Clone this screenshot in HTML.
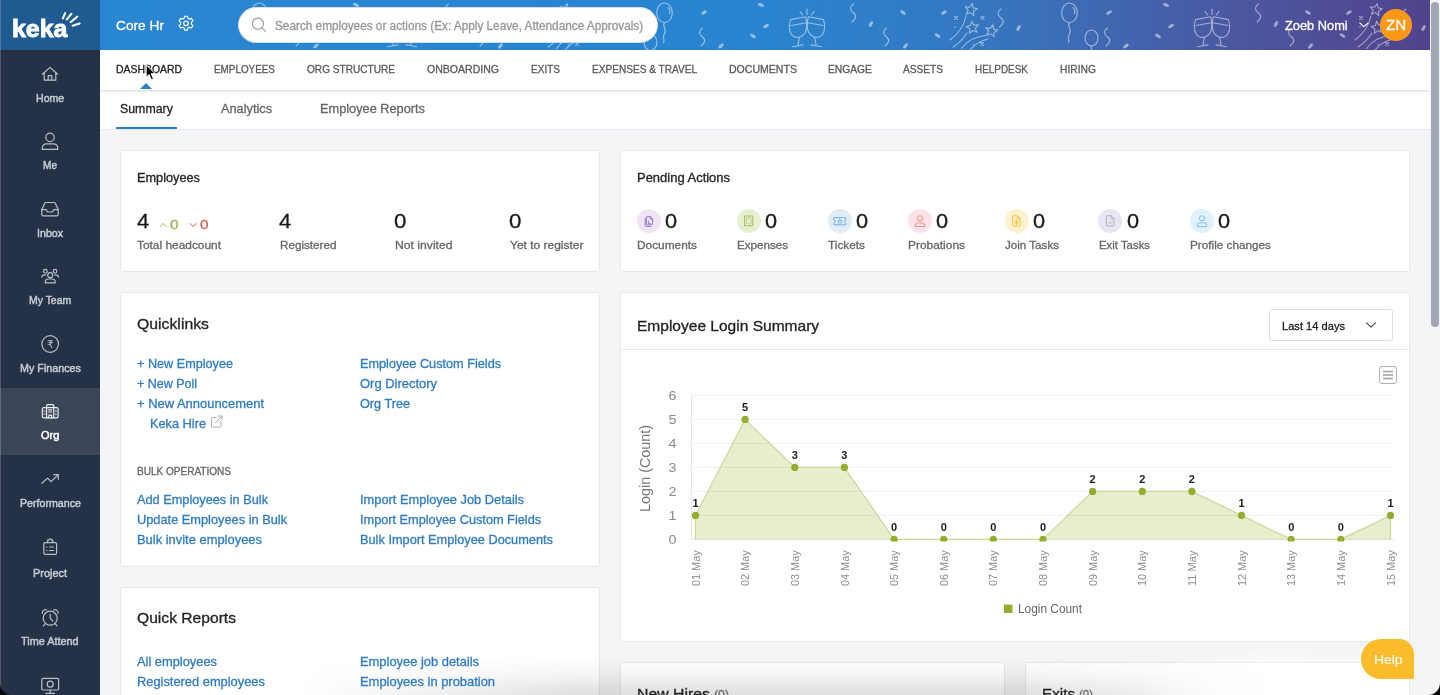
<!DOCTYPE html>
<html lang="en">
<head>
<meta charset="utf-8">
<title>Keka - Core HR Dashboard</title>
<style>
*{box-sizing:border-box;margin:0;padding:0}
html,body{width:1440px;height:695px;overflow:hidden;background:#f4f5f7;font-family:"Liberation Sans",sans-serif}
.abs{position:absolute}
.t{position:absolute;white-space:nowrap;-webkit-text-stroke:0.3px currentColor;transform-origin:0 50%;font-family:"Liberation Sans",sans-serif}
#side{left:0;top:0;width:100px;height:695px;background:#253146}
#logo{left:0;top:0;width:100px;height:50px;background:#1f5b90}
#orgact{left:0;top:388px;width:100px;height:67px;background:#3a4557}
#hdr{left:100px;top:0;width:1330px;height:50px;background:linear-gradient(90deg,#2986d1 0%,#2a84cf 50%,#3478c2 65%,#3f69b2 75%,#4a58a1 85%,#4f4c95 93%,#50448c 100%)}
#search{left:238px;top:7px;width:420px;height:36px;border-radius:18px;background:#fff;border:1px solid #d8dde3}
#nav{left:100px;top:50px;width:1330px;height:39.500px;background:#fff;box-shadow:0 1px 2.500px rgba(40,50,70,.22)}
#sub{left:100px;top:89.500px;width:1330px;height:40px;background:#fff;border-bottom:1px solid #e6e9ed}
#subact{left:116px;top:126.8px;width:61px;height:2.4px;background:#2a80cd}
#tri{left:139.7px;top:83.200px;width:0;height:0;border-left:6.500px solid transparent;border-right:6.500px solid transparent;border-bottom:6.400px solid #2a80cd}
.card{position:absolute;background:#fff;border:1px solid #e6e8eb;border-radius:3px}
#sbtrack{left:1430px;top:0;width:10px;height:695px;background:#f5f5f7}
#sbthumb{left:1431px;top:2px;width:8px;height:325px;border-radius:4px;background:#a0a6b3}
#avatar{left:1380px;top:9px;width:32px;height:32px;border-radius:16px;background:#fb9917}
#dd{left:1269px;top:309px;width:124px;height:32px;border:1px solid #dcdfe3;border-radius:3px;background:#fff}
#help{left:1361px;top:639px;width:53px;height:40px;background:#fbbc2c;border-radius:20px 15px 0 20px}
.pc{position:absolute;width:24px;height:24px;border-radius:12px;top:208.8px}
</style>
</head>
<body>
<div id="side" class="abs"></div>
<div id="orgact" class="abs"></div>
<div id="logo" class="abs"></div>
<div id="hdr" class="abs"></div>
<div id="sub" class="abs"></div>
<div id="nav" class="abs"></div>
<div id="subact" class="abs"></div>
<div id="tri" class="abs"></div>
<svg class="abs" style="left:100px;top:0" width="1330" height="50" viewBox="100 0 1330 50" fill="none" stroke="#fff" stroke-width="1.1" stroke-linecap="round" stroke-linejoin="round" opacity="0.5">
<g id="festtile"><ellipse cx="664.500" cy="12.800" rx="7.800" ry="9.800"/><path d="M664.500 22.600c-3 4 3 7 0 11s1 6-1 9"/><path d="M668 7.500a4 5 0 0 1 1.500 6"/>
<ellipse cx="704" cy="12.5" rx="3.200" ry="1.500" transform="rotate(-30 704 12.5)" fill="#fff" stroke="none"/>
<ellipse cx="766" cy="26" rx="3.200" ry="1.500" transform="rotate(-35 766 26)" fill="#fff" stroke="none"/>
<ellipse cx="753" cy="36" rx="3.200" ry="1.500" transform="rotate(30 753 36)" fill="#fff" stroke="none"/>
<ellipse cx="721" cy="46" rx="3.200" ry="1.500" transform="rotate(-40 721 46)" fill="#fff" stroke="none"/>
<ellipse cx="871" cy="24" rx="3.200" ry="1.500" transform="rotate(-60 871 24)" fill="#fff" stroke="none"/>
<ellipse cx="903" cy="12.5" rx="3.200" ry="1.500" transform="rotate(30 903 12.5)" fill="#fff" stroke="none"/>
<ellipse cx="944" cy="12.5" rx="3.200" ry="1.500" transform="rotate(-30 944 12.5)" fill="#fff" stroke="none"/>
<ellipse cx="937.5" cy="35.5" rx="3.200" ry="1.500" transform="rotate(30 937.5 35.5)" fill="#fff" stroke="none"/>
<ellipse cx="905.5" cy="46" rx="3.200" ry="1.500" transform="rotate(-50 905.5 46)" fill="#fff" stroke="none"/>
<ellipse cx="1018.6" cy="28" rx="3.200" ry="1.500" transform="rotate(-60 1018.6 28)" fill="#fff" stroke="none"/>
<ellipse cx="761" cy="5" rx="3.200" ry="1.500" transform="rotate(20 761 5)" fill="#fff" stroke="none"/>
<path d="M702.5 28c-4 3-4 6 0 9s2 6-1.500 9"/>
<path d="M853.5 4c-4 3-4 6 0 9s2 6-1.500 9"/>
<path d="M886.5 28c-4 3-4 6 0 9s2 6-1.500 9"/>
<path d="M1001.0 9c-4 3-4 6 0 9s2 6-1.500 9"/>
<path d="M790.500 19.600l15.200-2.800c2.200 9.500 1 18-6.500 20.500c-7.500 1-12-6-8.700-17.700z"/><path d="M791 25.500l15.500-2.800"/><path d="M799.500 37.300l-1.800 8.500 M792.500 46.800l10.500-1.900"/>
<path d="M823.500 19.600l-15.200-2.800c-2.200 9.500-1 18 6.500 20.500c7.500 1 12-6 8.700-17.700z"/><path d="M823 25.500l-15.500-2.800"/><path d="M814.500 37.300l1.800 8.500 M821.500 46.800l-10.500-1.900"/>
<path d="M807 9v5.500 M800 11.500l2.600 3.400 M814 11.500l-2.600 3.400"/>
<polygon points="972.1,3.5 973.1,7.8 977.3,8.9 973.5,11.2 973.8,15.6 970.5,12.6 966.4,14.2 968.1,10.2 965.3,6.8 969.7,7.2"/>
<polygon points="971.6,21.3 973.9,25.1 978.3,24.8 975.3,28.1 976.9,32.2 972.9,30.5 969.5,33.3 969.9,28.9 966.2,26.5 970.5,25.5"/>
<polygon points="992.8,24.7 993.6,29.1 997.9,30.3 994.0,32.4 994.1,36.8 990.9,33.8 986.7,35.3 988.6,31.3 986.0,27.8 990.3,28.4"/>
<path d="M966 16c-2 10-8 18-16 24"/><path d="M967 33c-4 6-9 11-14 14"/><path d="M985.500 35.500c-10 1-19 6-24 13"/><path d="M988 39c-8 2-14 6-18 11"/>
<path d="M954.5 16.5l3 3m0-3l-3 3"/>
<path d="M981.0 16.5l3 3m0-3l-3 3"/>
<path d="M980.5 42.5l3 3m0-3l-3 3"/>
<circle cx="955" cy="27" r=".8" fill="#fff" stroke="none"/><circle cx="973.500" cy="44.500" r=".8" fill="#fff" stroke="none"/></g>
<use href="#festtile" x="405"/><use href="#festtile" x="-405"/><use href="#festtile" x="810"/>
<ellipse cx="650.500" cy="42.500" rx="6.500" ry="8"/><ellipse cx="1091.500" cy="38" rx="6.500" ry="8"/><path d="M1091.500 46c-1 2 1 3 0 5"/>
</svg>
<div id="search" class="abs"></div>
<div id="avatar" class="abs"></div>

<div class="card" style="left:120px;top:150px;width:480px;height:122px"></div>
<div class="card" style="left:620px;top:150px;width:790px;height:122px"></div>
<div class="card" style="left:120px;top:292px;width:480px;height:275px"></div>
<div class="card" style="left:620px;top:292px;width:790px;height:350px"></div>
<div class="abs" style="left:621px;top:349px;width:788px;height:1px;background:#e4e7eb"></div>
<div class="card" style="left:120px;top:587px;width:480px;height:140px"></div>
<div class="card" style="left:620px;top:662px;width:385px;height:80px"></div>
<div class="card" style="left:1025px;top:662px;width:385px;height:80px"></div>
<div id="dd" class="abs"></div>

<div class="pc" style="left:636.9px;background:#f0e3f3"></div>
<div class="pc" style="left:737px;background:#e6efd0"></div>
<div class="pc" style="left:828px;background:#e2ecf7"></div>
<div class="pc" style="left:908px;background:#fbe4e7"></div>
<div class="pc" style="left:1004.7px;background:#fdf1d0"></div>
<div class="pc" style="left:1098.4px;background:#e9e6f3"></div>
<div class="pc" style="left:1190px;background:#dff1fa"></div>

<div class="abs" style="left:0;top:0;width:1440px;height:695px;will-change:transform"><svg class="abs" style="left:0;top:0" width="1440" height="695" viewBox="0 0 1440 695">
<rect x="691" y="538.9" width="703" height="1" fill="#e2e4e7"/>
<rect x="691" y="514.9" width="703" height="1" fill="#eeeff1"/>
<rect x="691" y="490.9" width="703" height="1" fill="#eeeff1"/>
<rect x="691" y="466.9" width="703" height="1" fill="#eeeff1"/>
<rect x="691" y="442.9" width="703" height="1" fill="#eeeff1"/>
<rect x="691" y="418.9" width="703" height="1" fill="#eeeff1"/>
<rect x="691" y="394.9" width="703" height="1" fill="#eeeff1"/>
<rect x="691" y="395.400" width="1" height="144" fill="#e6e8eb"/>
<clipPath id="plotclip"><rect x="685" y="380" width="715" height="161.600"/></clipPath><g clip-path="url(#plotclip)">
<polygon points="695.5,539.4 695.5,515.4 745.1,419.4 794.8,467.4 844.4,467.4 894.1,539.4 943.7,539.4 993.3,539.4 1043.0,539.4 1092.6,491.4 1142.3,491.4 1191.9,491.4 1241.5,515.4 1291.2,539.4 1340.8,539.4 1390.5,515.4 1390.5,539.4" fill="#a2b93c" fill-opacity="0.26"/>
<polyline points="695.5,539.4 695.5,515.4 745.1,419.4 794.8,467.4 844.4,467.4 894.1,539.4 943.7,539.4 993.3,539.4 1043.0,539.4 1092.6,491.4 1142.3,491.4 1191.9,491.4 1241.5,515.4 1291.2,539.4 1340.8,539.4 1390.5,515.4 1390.5,539.4" fill="none" stroke="#cbd89a" stroke-width="1.2"/>
<circle cx="695.5" cy="515.4" r="3.6" fill="#93ad2f"/>
<circle cx="745.1" cy="419.4" r="3.6" fill="#93ad2f"/>
<circle cx="794.8" cy="467.4" r="3.6" fill="#93ad2f"/>
<circle cx="844.4" cy="467.4" r="3.6" fill="#93ad2f"/>
<circle cx="894.1" cy="539.4" r="3.6" fill="#93ad2f"/>
<circle cx="943.7" cy="539.4" r="3.6" fill="#93ad2f"/>
<circle cx="993.3" cy="539.4" r="3.6" fill="#93ad2f"/>
<circle cx="1043.0" cy="539.4" r="3.6" fill="#93ad2f"/>
<circle cx="1092.6" cy="491.4" r="3.6" fill="#93ad2f"/>
<circle cx="1142.3" cy="491.4" r="3.6" fill="#93ad2f"/>
<circle cx="1191.9" cy="491.4" r="3.6" fill="#93ad2f"/>
<circle cx="1241.5" cy="515.4" r="3.6" fill="#93ad2f"/>
<circle cx="1291.2" cy="539.4" r="3.6" fill="#93ad2f"/>
<circle cx="1340.8" cy="539.4" r="3.6" fill="#93ad2f"/>
<circle cx="1390.5" cy="515.4" r="3.6" fill="#93ad2f"/>
</g>
<text x="695.5" y="507.1" text-anchor="middle" font-family="Liberation Sans, sans-serif" font-size="11" font-weight="bold" fill="#1c1c1c">1</text>
<text x="745.1" y="411.1" text-anchor="middle" font-family="Liberation Sans, sans-serif" font-size="11" font-weight="bold" fill="#1c1c1c">5</text>
<text x="794.8" y="459.1" text-anchor="middle" font-family="Liberation Sans, sans-serif" font-size="11" font-weight="bold" fill="#1c1c1c">3</text>
<text x="844.4" y="459.1" text-anchor="middle" font-family="Liberation Sans, sans-serif" font-size="11" font-weight="bold" fill="#1c1c1c">3</text>
<text x="894.1" y="531.1" text-anchor="middle" font-family="Liberation Sans, sans-serif" font-size="11" font-weight="bold" fill="#1c1c1c">0</text>
<text x="943.7" y="531.1" text-anchor="middle" font-family="Liberation Sans, sans-serif" font-size="11" font-weight="bold" fill="#1c1c1c">0</text>
<text x="993.3" y="531.1" text-anchor="middle" font-family="Liberation Sans, sans-serif" font-size="11" font-weight="bold" fill="#1c1c1c">0</text>
<text x="1043.0" y="531.1" text-anchor="middle" font-family="Liberation Sans, sans-serif" font-size="11" font-weight="bold" fill="#1c1c1c">0</text>
<text x="1092.6" y="483.1" text-anchor="middle" font-family="Liberation Sans, sans-serif" font-size="11" font-weight="bold" fill="#1c1c1c">2</text>
<text x="1142.3" y="483.1" text-anchor="middle" font-family="Liberation Sans, sans-serif" font-size="11" font-weight="bold" fill="#1c1c1c">2</text>
<text x="1191.9" y="483.1" text-anchor="middle" font-family="Liberation Sans, sans-serif" font-size="11" font-weight="bold" fill="#1c1c1c">2</text>
<text x="1241.5" y="507.1" text-anchor="middle" font-family="Liberation Sans, sans-serif" font-size="11" font-weight="bold" fill="#1c1c1c">1</text>
<text x="1291.2" y="531.1" text-anchor="middle" font-family="Liberation Sans, sans-serif" font-size="11" font-weight="bold" fill="#1c1c1c">0</text>
<text x="1340.8" y="531.1" text-anchor="middle" font-family="Liberation Sans, sans-serif" font-size="11" font-weight="bold" fill="#1c1c1c">0</text>
<text x="1390.5" y="507.1" text-anchor="middle" font-family="Liberation Sans, sans-serif" font-size="11" font-weight="bold" fill="#1c1c1c">1</text>
<text x="676.5" y="543.8" text-anchor="end" font-family="Liberation Sans, sans-serif" font-size="12" fill="#8a8a8a" textLength="8" lengthAdjust="spacingAndGlyphs">0</text>
<text x="676.5" y="519.8" text-anchor="end" font-family="Liberation Sans, sans-serif" font-size="12" fill="#8a8a8a" textLength="8" lengthAdjust="spacingAndGlyphs">1</text>
<text x="676.5" y="495.8" text-anchor="end" font-family="Liberation Sans, sans-serif" font-size="12" fill="#8a8a8a" textLength="8" lengthAdjust="spacingAndGlyphs">2</text>
<text x="676.5" y="471.8" text-anchor="end" font-family="Liberation Sans, sans-serif" font-size="12" fill="#8a8a8a" textLength="8" lengthAdjust="spacingAndGlyphs">3</text>
<text x="676.5" y="447.8" text-anchor="end" font-family="Liberation Sans, sans-serif" font-size="12" fill="#8a8a8a" textLength="8" lengthAdjust="spacingAndGlyphs">4</text>
<text x="676.5" y="423.8" text-anchor="end" font-family="Liberation Sans, sans-serif" font-size="12" fill="#8a8a8a" textLength="8" lengthAdjust="spacingAndGlyphs">5</text>
<text x="676.5" y="399.8" text-anchor="end" font-family="Liberation Sans, sans-serif" font-size="12" fill="#8a8a8a" textLength="8" lengthAdjust="spacingAndGlyphs">6</text>
<text transform="translate(649.800,468.400) rotate(-90)" text-anchor="middle" font-family="Liberation Sans, sans-serif" font-size="14.5" fill="#777" textLength="87" lengthAdjust="spacingAndGlyphs">Login (Count)</text>
<text transform="translate(699.6,586) rotate(-90)" font-family="Liberation Sans, sans-serif" font-size="11.800" fill="#8c8c8c" textLength="35.600" lengthAdjust="spacingAndGlyphs">01 May</text>
<text transform="translate(749.2,586) rotate(-90)" font-family="Liberation Sans, sans-serif" font-size="11.800" fill="#8c8c8c" textLength="35.600" lengthAdjust="spacingAndGlyphs">02 May</text>
<text transform="translate(798.9,586) rotate(-90)" font-family="Liberation Sans, sans-serif" font-size="11.800" fill="#8c8c8c" textLength="35.600" lengthAdjust="spacingAndGlyphs">03 May</text>
<text transform="translate(848.5,586) rotate(-90)" font-family="Liberation Sans, sans-serif" font-size="11.800" fill="#8c8c8c" textLength="35.600" lengthAdjust="spacingAndGlyphs">04 May</text>
<text transform="translate(898.2,586) rotate(-90)" font-family="Liberation Sans, sans-serif" font-size="11.800" fill="#8c8c8c" textLength="35.600" lengthAdjust="spacingAndGlyphs">05 May</text>
<text transform="translate(947.8,586) rotate(-90)" font-family="Liberation Sans, sans-serif" font-size="11.800" fill="#8c8c8c" textLength="35.600" lengthAdjust="spacingAndGlyphs">06 May</text>
<text transform="translate(997.4,586) rotate(-90)" font-family="Liberation Sans, sans-serif" font-size="11.800" fill="#8c8c8c" textLength="35.600" lengthAdjust="spacingAndGlyphs">07 May</text>
<text transform="translate(1047.1,586) rotate(-90)" font-family="Liberation Sans, sans-serif" font-size="11.800" fill="#8c8c8c" textLength="35.600" lengthAdjust="spacingAndGlyphs">08 May</text>
<text transform="translate(1096.7,586) rotate(-90)" font-family="Liberation Sans, sans-serif" font-size="11.800" fill="#8c8c8c" textLength="35.600" lengthAdjust="spacingAndGlyphs">09 May</text>
<text transform="translate(1146.4,586) rotate(-90)" font-family="Liberation Sans, sans-serif" font-size="11.800" fill="#8c8c8c" textLength="35.600" lengthAdjust="spacingAndGlyphs">10 May</text>
<text transform="translate(1196.0,586) rotate(-90)" font-family="Liberation Sans, sans-serif" font-size="11.800" fill="#8c8c8c" textLength="35.600" lengthAdjust="spacingAndGlyphs">11 May</text>
<text transform="translate(1245.6,586) rotate(-90)" font-family="Liberation Sans, sans-serif" font-size="11.800" fill="#8c8c8c" textLength="35.600" lengthAdjust="spacingAndGlyphs">12 May</text>
<text transform="translate(1295.3,586) rotate(-90)" font-family="Liberation Sans, sans-serif" font-size="11.800" fill="#8c8c8c" textLength="35.600" lengthAdjust="spacingAndGlyphs">13 May</text>
<text transform="translate(1344.9,586) rotate(-90)" font-family="Liberation Sans, sans-serif" font-size="11.800" fill="#8c8c8c" textLength="35.600" lengthAdjust="spacingAndGlyphs">14 May</text>
<text transform="translate(1394.6,586) rotate(-90)" font-family="Liberation Sans, sans-serif" font-size="11.800" fill="#8c8c8c" textLength="35.600" lengthAdjust="spacingAndGlyphs">15 May</text>
<rect x="1004" y="604.5" width="8.5" height="8.5" fill="#93ad2f"/>
<text x="1018" y="613.2" font-family="Liberation Sans, sans-serif" font-size="12" fill="#666" textLength="64" lengthAdjust="spacingAndGlyphs">Login Count</text>
<rect x="1379.5" y="366.5" width="17" height="17" rx="2.5" fill="#fff" stroke="#adafb3"/>
<rect x="1383" y="370.7" width="10" height="1.600" fill="#a3a5a8"/>
<rect x="1383" y="374.2" width="10" height="1.600" fill="#a3a5a8"/>
<rect x="1383" y="377.7" width="10" height="1.600" fill="#a3a5a8"/>
</svg></div>
<svg class="abs" style="left:0;top:0" width="1440" height="695" viewBox="0 0 1440 695" fill="none" stroke-linecap="round" stroke-linejoin="round">
<!-- logo rays -->
<g stroke="#fff" stroke-width="2.1">
<path d="M62.9 18.3 L65.2 13.1"/><path d="M66.9 19.4 L71.4 13.9"/><path d="M70.5 22.2 L77.2 16.7"/><path d="M72.6 25.7 L79.6 23.5"/>
</g>
<!-- gear -->
<g stroke="#fff" stroke-width="1.15">
<path d="M184.6 16.2h2.8l.5 2.1 1.5.8 2-.7 1.5 2.4-1.5 1.5v1.8l1.5 1.5-1.5 2.4-2-.7-1.5.8-.5 2.1h-2.8l-.5-2.1-1.5-.8-2 .7-1.500-2.400 1.500-1.500v-1.800l-1.500-1.500 1.500-2.400 2 .7 1.500-.8z"/>
<circle cx="186" cy="23.3" r="2.3"/>
</g>
<!-- search icon -->
<g stroke="#9a9a9a" stroke-width="1.1"><circle cx="257.9" cy="23.7" r="5.6"/><path d="M262 27.8 L265.5 31.3"/></g>
<!-- user chevron -->
<path d="M1359.8 23 L1363.9 26.6 L1368 23" stroke="#fff" stroke-width="1.1"/>
<!-- dropdown chevron -->
<path d="M1366.5 322.8 L1371 327.2 L1375.500 322.8" stroke="#444" stroke-width="1.1"/>
<!-- trend chevrons -->
<path d="M160 226.700 L163.200 223.500 L166.500 226.700" stroke="#c2d38e" stroke-width="1.1"/>
<path d="M190.100 223.500 L193.200 226.600 L196.300 223.500" stroke="#eb9a94" stroke-width="1.1"/>
<!-- external link -->
<g stroke="#a8adb3" stroke-width="1"><path d="M216 417.500h-3.500a1 1 0 0 0-1 1v7.500a1 1 0 0 0 1 1h7.500a1 1 0 0 0 1-1v-3.500"/><path d="M215.500 422.500 L222 416 M218 416h4v4"/></g>
<!-- sidebar icons -->
<g stroke="#b9c0cb" stroke-width="1.2">
<!-- home -->
<path d="M42.300 74.200 L50 67.400 L57.700 74.200"/><path d="M44.200 72.800v7.400h11.600v-7.400"/><path d="M48.200 80.200v-4.600h3.600v4.600"/>
<!-- me -->
<circle cx="50" cy="137.400" r="4.200"/><path d="M42.300 149.400v-1.400a4.200 4.200 0 0 1 4.200-4.200h7a4.200 4.200 0 0 1 4.200 4.200v1.400z"/>
<!-- inbox -->
<path d="M41.800 209.600 L44.600 203.400a1.600 1.600 0 0 1 1.400-.9h8a1.600 1.600 0 0 1 1.400.9 L58.200 209.600v4.800a1.400 1.400 0 0 1-1.400 1.400h-13.600a1.400 1.400 0 0 1-1.400-1.400z"/><path d="M41.800 209.600h4.400l1.200 2.400h5.200l1.200-2.400h4.400"/>
<!-- team -->
<circle cx="50.200" cy="275.200" r="2.500"/><path d="M45.200 282.800v-.6a3.200 3.200 0 0 1 3.200-3.200h3.600a3.200 3.200 0 0 1 3.200 3.200v.6z"/>
<circle cx="45.400" cy="271.200" r="1.800"/><circle cx="55" cy="271.200" r="1.800"/>
<path d="M41.800 277.200a3 3 0 0 1 3-2.400h1"/><path d="M58.600 277.200a3 3 0 0 0-3-2.400h-1"/>
<!-- finances -->
<circle cx="50.200" cy="344" r="8.300"/>
<!-- performance -->
<path d="M41.900 483.300 L47.600 478.100 L51 481.600 L58.200 474.800"/><path d="M53.800 474.700h4.500v4.500"/>
<!-- project -->
<rect x="43.800" y="542.600" width="12.800" height="11.800" rx="1.600"/><path d="M47.600 542.600v-2.400h1.200a1.400 1.400 0 0 1 2.800 0h1.200v2.400"/>
<path d="M49.600 547h4 M49.600 550.500h4"/><path d="M46.600 547h.4 M46.600 550.500h.4"/>
<!-- time attend -->
<circle cx="50.200" cy="618.200" r="7"/><path d="M50.200 614.400v4l2.600 2.600"/>
<path d="M42.400 613.400a3 3 0 0 1 4.200-3.400"/><path d="M58 613.400a3 3 0 0 0-4.200-3.400"/><path d="M45.200 623.800 L43.400 625.800 M55.200 623.800 L57 625.800"/>
<!-- last -->
<rect x="41.800" y="678.400" width="16.800" height="11.600" rx="1.400"/><circle cx="50.200" cy="684.200" r="3"/><path d="M50.200 690v3 M46 693.400h8.400"/>
</g>
<!-- org (active) -->
<g stroke="#eef1f5" stroke-width="1.150">
<rect x="42.300" y="407.600" width="15.800" height="10.200" rx="1.600"/><path d="M46.600 407.600v-1.800a1.200 1.200 0 0 1 1.200-1.200h4.800a1.200 1.200 0 0 1 1.200 1.200v1.800"/>
<path d="M46.600 407.600v10.200 M53.800 407.600v10.200"/><path d="M48.600 409.800h3.200 M48.600 412h3.200 M48.800 417.800v-2.600h2.800v2.600"/>
<path d="M44 411h1 M44 414h1 M55.400 411h1 M55.400 414h1"/>
</g>
<text x="50.300" y="348.300" text-anchor="middle" font-family="DejaVu Sans, sans-serif" font-size="10.500" fill="#b9c0cb" stroke="none">₹</text>
<!-- pending icons -->
<g stroke-width="1">
<g stroke="#8c7cc6"><path d="M647.200 216.600h3l2.400 2.400v5a.8.800 0 0 1-.8.800h-4.600a.8.800 0 0 1-.8-.8v-6.600a.8.800 0 0 1 .8-.8z"/><path d="M650.200 216.600v2.400h2.400"/><path d="M645.200 218.400v7a1 1 0 0 0 1 1h4.600"/><path d="M648.400 221v2.600h2"/></g>
<g stroke="#a4be55"><rect x="745" y="216" width="7.800" height="9.800"/><rect x="746.900" y="218" width="4" height="5.800" stroke-width=".8" stroke="#b9cd7d"/></g>
<g stroke="#6cb0e4"><path d="M834 217.600h11.800v2.200a1.400 1.400 0 0 0 0 2.800v2.200h-11.800v-2.200a1.400 1.400 0 0 0 0-2.800z"/><path d="M839.900 219l.7 1.500 1.600.2-1.200 1.100.3 1.600-1.400-.8-1.400.8.300-1.600-1.200-1.100 1.600-.2z" stroke-width=".8"/></g>
<g stroke="#ea8d92"><circle cx="920" cy="218.300" r="2.600"/><path d="M915.200 226.200v-.8a2.600 2.600 0 0 1 2.600-2.600h4.400a2.600 2.600 0 0 1 2.600 2.600v.8z"/></g>
<g stroke="#f0c244"><path d="M1013.400 215.800h4l2.800 2.800v6.600a.8.800 0 0 1-.8.800h-6a.8.800 0 0 1-.8-.8v-8.600a.8.800 0 0 1 .8-.8z"/><path d="M1017.400 215.800v2.800h2.800"/><path d="M1014.600 221h3.600 M1014.600 223h3.600 M1016.400 219.600v5"/></g>
<g stroke="#b4b4bd"><path d="M1107.200 215.800h4l2.800 2.800v6.600a.8.800 0 0 1-.8.800h-6a.8.800 0 0 1-.8-.8v-8.600a.8.800 0 0 1 .8-.8z"/><path d="M1111.200 215.800v2.800h2.800"/><path d="M1108.600 222.400l1.400 1.400 2.400-2.600"/></g>
<g stroke="#7fbbea"><circle cx="1202" cy="218.300" r="2.600"/><path d="M1197.200 226.200v-.8a2.600 2.600 0 0 1 2.600-2.600h4.400a2.600 2.600 0 0 1 2.600 2.600v.8z"/></g>
</g>
</svg>

<div id="botshadow" class="abs" style="left:300px;top:655px;width:1000px;height:40px;background:linear-gradient(180deg,rgba(0,0,0,0) 0%,rgba(0,0,0,.035) 45%,rgba(0,0,0,.13) 100%);-webkit-mask-image:linear-gradient(90deg,transparent 0%,#000 28%,#000 72%,transparent 100%);mask-image:linear-gradient(90deg,transparent 0%,#000 28%,#000 72%,transparent 100%)"></div>
<div id="botglow" class="abs" style="left:1130px;top:640px;width:300px;height:55px;background:radial-gradient(ellipse 150px 50px at 50% 100%,rgba(255,255,255,.95) 0%,rgba(255,255,255,.7) 45%,rgba(255,255,255,0) 100%)"></div>
<div id="help" class="abs"></div>
<div id="txt" class="abs" style="left:0;top:0;width:1440px;height:695px;will-change:transform">
<div class="t" style="left:11.8px;top:12.7px;font-size:24px;line-height:31px;color:#ffffff;transform:scaleX(1.038);font-weight:bold;-webkit-text-stroke:0.9px #fff;">keka</div>
<div class="t" style="left:116px;top:16.6px;font-size:13.5px;line-height:18px;color:#ffffff;transform:scaleX(1.016);">Core Hr</div>
<div class="t" style="left:275px;top:17.6px;font-size:12px;line-height:16px;color:#979797;transform:scaleX(0.982);">Search employees or actions (Ex: Apply Leave, Attendance Approvals)</div>
<div class="t" style="left:1284.8px;top:16.8px;font-size:13px;line-height:18px;color:#ffffff;transform:scaleX(0.986);">Zoeb Nomi</div>
<div class="t" style="left:1386px;top:16.4px;font-size:14.5px;line-height:19px;color:#ffffff;transform:scaleX(1.044);">ZN</div>
<div class="t" style="left:116px;top:62.7px;font-size:10.4px;line-height:14px;color:#222222;transform:scaleX(1.003);">DASHBOARD</div>
<div class="t" style="left:214px;top:62.7px;font-size:10.4px;line-height:14px;color:#5a5a5a;transform:scaleX(0.951);">EMPLOYEES</div>
<div class="t" style="left:307px;top:62.7px;font-size:10.4px;line-height:14px;color:#5a5a5a;transform:scaleX(0.971);">ORG STRUCTURE</div>
<div class="t" style="left:427px;top:62.7px;font-size:10.4px;line-height:14px;color:#5a5a5a;transform:scaleX(1.014);">ONBOARDING</div>
<div class="t" style="left:531px;top:62.7px;font-size:10.4px;line-height:14px;color:#5a5a5a;transform:scaleX(0.966);">EXITS</div>
<div class="t" style="left:592px;top:62.7px;font-size:10.4px;line-height:14px;color:#5a5a5a;transform:scaleX(0.971);">EXPENSES &amp; TRAVEL</div>
<div class="t" style="left:729px;top:62.7px;font-size:10.4px;line-height:14px;color:#5a5a5a;transform:scaleX(1.015);">DOCUMENTS</div>
<div class="t" style="left:828px;top:62.7px;font-size:10.4px;line-height:14px;color:#5a5a5a;transform:scaleX(0.989);">ENGAGE</div>
<div class="t" style="left:903px;top:62.7px;font-size:10.4px;line-height:14px;color:#5a5a5a;transform:scaleX(0.976);">ASSETS</div>
<div class="t" style="left:975px;top:62.7px;font-size:10.4px;line-height:14px;color:#5a5a5a;transform:scaleX(0.956);">HELPDESK</div>
<div class="t" style="left:1060px;top:62.7px;font-size:10.4px;line-height:14px;color:#5a5a5a;transform:scaleX(0.990);">HIRING</div>
<div class="t" style="left:120.2px;top:101.2px;font-size:12.6px;line-height:17px;color:#222222;transform:scaleX(0.980);">Summary</div>
<div class="t" style="left:221px;top:101.2px;font-size:12.6px;line-height:17px;color:#666666;transform:scaleX(1.012);">Analytics</div>
<div class="t" style="left:320px;top:101.2px;font-size:12.6px;line-height:17px;color:#666666;transform:scaleX(1.013);">Employee Reports</div>
<div class="t" style="left:36px;top:90.7px;font-size:11px;line-height:15px;color:#c3c9d3;transform:scaleX(0.961);-webkit-text-stroke:0.5px currentColor;">Home</div>
<div class="t" style="left:43px;top:158.0px;font-size:11px;line-height:15px;color:#c3c9d3;transform:scaleX(0.916);-webkit-text-stroke:0.5px currentColor;">Me</div>
<div class="t" style="left:36.7px;top:225.5px;font-size:11px;line-height:15px;color:#c3c9d3;transform:scaleX(0.969);-webkit-text-stroke:0.5px currentColor;">Inbox</div>
<div class="t" style="left:29px;top:293.0px;font-size:11px;line-height:15px;color:#c3c9d3;transform:scaleX(0.950);-webkit-text-stroke:0.5px currentColor;">My Team</div>
<div class="t" style="left:19.5px;top:360.8px;font-size:11px;line-height:15px;color:#c3c9d3;transform:scaleX(0.978);-webkit-text-stroke:0.5px currentColor;">My Finances</div>
<div class="t" style="left:41px;top:428.0px;font-size:11px;line-height:15px;color:#ffffff;transform:scaleX(0.998);-webkit-text-stroke:0.5px currentColor;">Org</div>
<div class="t" style="left:19.5px;top:495.8px;font-size:11px;line-height:15px;color:#c3c9d3;transform:scaleX(0.968);-webkit-text-stroke:0.5px currentColor;">Performance</div>
<div class="t" style="left:33px;top:566.3px;font-size:11px;line-height:15px;color:#c3c9d3;transform:scaleX(0.993);-webkit-text-stroke:0.5px currentColor;">Project</div>
<div class="t" style="left:21.4px;top:634.3px;font-size:11px;line-height:15px;color:#c3c9d3;transform:scaleX(0.988);-webkit-text-stroke:0.5px currentColor;">Time Attend</div>
<div class="t" style="left:137px;top:169.6px;font-size:12px;line-height:16px;color:#222222;transform:scaleX(1.061);">Employees</div>
<div class="t" style="left:136.7px;top:208.4px;font-size:19.8px;line-height:26px;color:#1a1a1a;transform:scaleX(1.108);">4</div>
<div class="t" style="left:137px;top:238.1px;font-size:11.2px;line-height:15px;color:#666666;transform:scaleX(1.063);">Total headcount</div>
<div class="t" style="left:279.2px;top:208.4px;font-size:19.8px;line-height:26px;color:#1a1a1a;transform:scaleX(1.108);">4</div>
<div class="t" style="left:279.5px;top:238.1px;font-size:11.2px;line-height:15px;color:#666666;transform:scaleX(1.044);">Registered</div>
<div class="t" style="left:394.3px;top:208.4px;font-size:19.8px;line-height:26px;color:#1a1a1a;transform:scaleX(1.126);">0</div>
<div class="t" style="left:394.5px;top:238.1px;font-size:11.2px;line-height:15px;color:#666666;transform:scaleX(1.088);">Not invited</div>
<div class="t" style="left:509.3px;top:208.4px;font-size:19.8px;line-height:26px;color:#1a1a1a;transform:scaleX(1.126);">0</div>
<div class="t" style="left:509.5px;top:238.1px;font-size:11.2px;line-height:15px;color:#666666;transform:scaleX(1.071);">Yet to register</div>
<div class="t" style="left:169.9px;top:216.4px;font-size:13px;line-height:18px;color:#9bb54a;transform:scaleX(1.189);">0</div>
<div class="t" style="left:199.9px;top:216.4px;font-size:13px;line-height:18px;color:#d9604c;transform:scaleX(1.189);">0</div>
<div class="t" style="left:637px;top:169.6px;font-size:12px;line-height:16px;color:#222222;transform:scaleX(1.081);">Pending Actions</div>
<div class="t" style="left:665.3000000000001px;top:208.4px;font-size:19.8px;line-height:26px;color:#1a1a1a;transform:scaleX(1.098);">0</div>
<div class="t" style="left:637px;top:238.1px;font-size:11.2px;line-height:15px;color:#666666;transform:scaleX(1.060);">Documents</div>
<div class="t" style="left:765.3000000000001px;top:208.4px;font-size:19.8px;line-height:26px;color:#1a1a1a;transform:scaleX(1.098);">0</div>
<div class="t" style="left:737px;top:238.1px;font-size:11.2px;line-height:15px;color:#666666;transform:scaleX(1.038);">Expenses</div>
<div class="t" style="left:856.0px;top:208.4px;font-size:19.8px;line-height:26px;color:#1a1a1a;transform:scaleX(1.098);">0</div>
<div class="t" style="left:828px;top:238.1px;font-size:11.2px;line-height:15px;color:#666666;transform:scaleX(1.057);">Tickets</div>
<div class="t" style="left:936.0px;top:208.4px;font-size:19.8px;line-height:26px;color:#1a1a1a;transform:scaleX(1.098);">0</div>
<div class="t" style="left:908px;top:238.1px;font-size:11.2px;line-height:15px;color:#666666;transform:scaleX(1.065);">Probations</div>
<div class="t" style="left:1032.6px;top:208.4px;font-size:19.8px;line-height:26px;color:#1a1a1a;transform:scaleX(1.098);">0</div>
<div class="t" style="left:1005px;top:238.1px;font-size:11.2px;line-height:15px;color:#666666;transform:scaleX(1.038);">Join Tasks</div>
<div class="t" style="left:1126.8px;top:208.4px;font-size:19.8px;line-height:26px;color:#1a1a1a;transform:scaleX(1.098);">0</div>
<div class="t" style="left:1099px;top:238.1px;font-size:11.2px;line-height:15px;color:#666666;transform:scaleX(1.017);">Exit Tasks</div>
<div class="t" style="left:1218.0px;top:208.4px;font-size:19.8px;line-height:26px;color:#1a1a1a;transform:scaleX(1.098);">0</div>
<div class="t" style="left:1190px;top:238.1px;font-size:11.2px;line-height:15px;color:#666666;transform:scaleX(1.050);">Profile changes</div>
<div class="t" style="left:137px;top:313.6px;font-size:15px;line-height:20px;color:#222222;transform:scaleX(1.053);">Quicklinks</div>
<div class="t" style="left:137px;top:354.6px;font-size:13px;line-height:18px;color:#2e7bc0;transform:scaleX(0.973);">+ New Employee</div>
<div class="t" style="left:137px;top:374.6px;font-size:13px;line-height:18px;color:#2e7bc0;transform:scaleX(0.960);">+ New Poll</div>
<div class="t" style="left:137px;top:394.6px;font-size:13px;line-height:18px;color:#2e7bc0;transform:scaleX(0.996);">+ New Announcement</div>
<div class="t" style="left:150px;top:414.6px;font-size:13px;line-height:18px;color:#2e7bc0;transform:scaleX(0.981);">Keka Hire</div>
<div class="t" style="left:360px;top:354.6px;font-size:13px;line-height:18px;color:#2e7bc0;transform:scaleX(0.976);">Employee Custom Fields</div>
<div class="t" style="left:360px;top:374.6px;font-size:13px;line-height:18px;color:#2e7bc0;transform:scaleX(0.996);">Org Directory</div>
<div class="t" style="left:360px;top:394.6px;font-size:13px;line-height:18px;color:#2e7bc0;transform:scaleX(0.975);">Org Tree</div>
<div class="t" style="left:137px;top:490.6px;font-size:13px;line-height:18px;color:#2e7bc0;transform:scaleX(0.980);">Add Employees in Bulk</div>
<div class="t" style="left:137px;top:510.6px;font-size:13px;line-height:18px;color:#2e7bc0;transform:scaleX(0.984);">Update Employees in Bulk</div>
<div class="t" style="left:137px;top:530.6px;font-size:13px;line-height:18px;color:#2e7bc0;transform:scaleX(0.994);">Bulk invite employees</div>
<div class="t" style="left:360px;top:490.6px;font-size:13px;line-height:18px;color:#2e7bc0;transform:scaleX(0.987);">Import Employee Job Details</div>
<div class="t" style="left:360px;top:510.6px;font-size:13px;line-height:18px;color:#2e7bc0;transform:scaleX(0.979);">Import Employee Custom Fields</div>
<div class="t" style="left:360px;top:530.6px;font-size:13px;line-height:18px;color:#2e7bc0;transform:scaleX(0.982);">Bulk Import Employee Documents</div>
<div class="t" style="left:137px;top:652.6px;font-size:13px;line-height:18px;color:#2e7bc0;transform:scaleX(0.988);">All employees</div>
<div class="t" style="left:137px;top:672.6px;font-size:13px;line-height:18px;color:#2e7bc0;transform:scaleX(0.989);">Registered employees</div>
<div class="t" style="left:360px;top:652.6px;font-size:13px;line-height:18px;color:#2e7bc0;transform:scaleX(0.992);">Employee job details</div>
<div class="t" style="left:360px;top:672.6px;font-size:13px;line-height:18px;color:#2e7bc0;transform:scaleX(0.994);">Employees in probation</div>
<div class="t" style="left:137px;top:464.6px;font-size:10px;line-height:14px;color:#666666;transform:scaleX(1.003);">BULK OPERATIONS</div>
<div class="t" style="left:137px;top:607.6px;font-size:15px;line-height:20px;color:#222222;transform:scaleX(1.042);">Quick Reports</div>
<div class="t" style="left:637px;top:315.6px;font-size:15px;line-height:20px;color:#222222;transform:scaleX(1.035);">Employee Login Summary</div>
<div class="t" style="left:1282px;top:317.6px;font-size:11.5px;line-height:16px;color:#222222;transform:scaleX(0.966);">Last 14 days</div>
<div class="t" style="left:637px;top:683.6px;font-size:15px;line-height:20px;color:#222222;transform:scaleX(1.055);">New Hires</div>
<div class="t" style="left:714px;top:685.6px;font-size:13px;line-height:18px;color:#666666;transform:scaleX(0.944);">(0)</div>
<div class="t" style="left:1042px;top:683.6px;font-size:15px;line-height:20px;color:#222222;transform:scaleX(1.015);">Exits</div>
<div class="t" style="left:1079px;top:685.6px;font-size:13px;line-height:18px;color:#666666;transform:scaleX(0.881);">(0)</div>
<div class="t" style="left:1373.5px;top:650.8px;font-size:13.4px;line-height:18px;color:#ffffff;transform:scaleX(1.035);-webkit-text-stroke:0.1px #fff;">Help</div>
</div>
<svg id="cursor" class="abs" style="left:143px;top:62px" width="16" height="22" viewBox="0 0 16 22"><path d="M3.200 2.800v12.400l2.900-2.700 2.300 5.300 2.100-.9-2.300-5.200h4z" fill="#000" stroke="#fff" stroke-width="1" stroke-linejoin="round"/></svg>
<div id="ledge" class="abs" style="left:0;top:0;width:1.200px;height:695px;background:rgba(255,255,255,.2)"></div>
<div id="sbtrack" class="abs"></div>
<div id="sbthumb" class="abs"></div>
<svg class="abs" style="left:0;top:683px" width="1440" height="12" viewBox="0 0 1440 12"><path d="M1440 0v12h-12a12 12 0 0 0 12-12z" fill="#0a0a0a"/><path d="M0 0v12h12a12 12 0 0 1-12-12z" fill="#0a0a0a"/></svg>
</body>
</html>
